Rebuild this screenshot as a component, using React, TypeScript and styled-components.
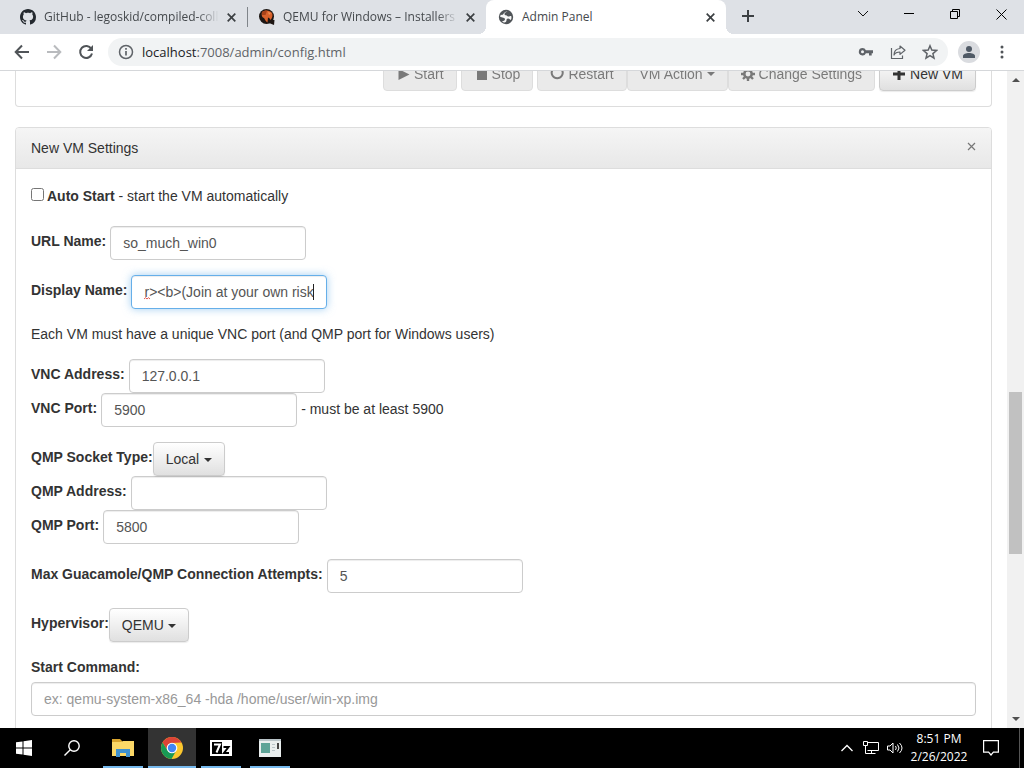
import React from "react";
import styled, { createGlobalStyle } from "styled-components";

const GlobalStyle = createGlobalStyle`
  * { box-sizing: border-box; }
  body { margin: 0; background: #fff; color: #333; font: 14px/20px "Liberation Sans", Arial, sans-serif; overflow: hidden; }
  button, input, select { font: inherit; color: inherit; margin: 0; }
`;

const Desktop = styled.div`
  display: flex;
  flex-direction: column;
  height: 100vh;
`;

const uiFont = `"Open Sans", "Noto Sans", sans-serif`;

const IconButton = styled.button<{ $w?: number }>`
  display: flex;
  align-items: center;
  justify-content: center;
  flex: none;
  width: ${(p) => p.$w ?? 32}px;
  height: 32px;
  padding: 0;
  border: 0;
  background: none;
  color: #5f6368;
`;

/* Tab strip */
const TabStrip = styled.header`
  display: flex;
  height: 34px;
  background: #dee1e6;
  font: 12px/16px ${uiFont};
  color: #45494d;
`;

const Tab = styled.div<{ $w: number; $lead?: number }>`
  display: flex;
  align-items: center;
  gap: 8px;
  width: ${(p) => p.$w}px;
  padding: 0 11px 0 ${(p) => p.$lead ?? 12}px;
`;

/* The selected tab flares out into the toolbar at both feet. */
const ActiveTab = styled(Tab)`
  position: relative;
  background: #fff;
  border-radius: 8px 8px 0 0;
  &::before,
  &::after {
    content: "";
    position: absolute;
    bottom: 0;
    width: 8px;
    height: 8px;
  }
  &::before { right: 100%; background: radial-gradient(circle at 0 0, transparent 8px, #fff 8px); }
  &::after { left: 100%; background: radial-gradient(circle at 100% 0, transparent 8px, #fff 8px); }
`;

const Favicon = styled.svg`
  flex: none;
  width: 16px;
  height: 16px;
`;

const TabTitle = styled.span<{ $fade?: boolean }>`
  flex: 1;
  min-width: 0;
  overflow: hidden;
  white-space: nowrap;
  ${(p) => p.$fade && "mask-image: linear-gradient(to right, #000 88%, transparent);"}
`;

const TabDivider = styled.span`
  align-self: center;
  width: 1px;
  height: 20px;
  background: #80858a;
`;

const WindowControls = styled.div`
  display: flex;
  margin-left: auto;
  height: 28px;
  align-items: center;
`;

/* Toolbar */
const Toolbar = styled.div`
  display: flex;
  align-items: center;
  height: 37px;
  padding: 0 0 0 6px;
  background: #fff;
  border-bottom: 1px solid #d5d7da;
`;

const AddressBar = styled.div`
  display: flex;
  flex: 1;
  align-items: center;
  gap: 8px;
  height: 28px;
  margin: 0 10px 0 6px;
  padding: 0 2px 0 10px;
  border-radius: 14px;
  background: #f1f3f4;
`;

const AddressActions = styled.div`
  display: flex;
`;

const Address = styled.div`
  flex: 1;
  font: 13px/20px ${uiFont};
  color: #5f6368;
  b { font-weight: 400; color: #202124; }
`;

const Avatar = styled.button`
  display: flex;
  align-items: center;
  justify-content: center;
  width: 22px;
  height: 22px;
  padding: 0;
  border: 0;
  border-radius: 50%;
  background: #dadce0;
`;

/* Page */
const Viewport = styled.div`
  display: flex;
  flex: 1;
  min-height: 0;
`;

const Page = styled.main`
  flex: 1;
  min-width: 0;
  overflow: hidden;
  padding: 0 15px;
`;

const PageContent = styled.div`
  margin-top: -14px;
`;

const ActionPanel = styled.section`
  display: flex;
  justify-content: flex-end;
  gap: 4px;
  margin-bottom: 20px;
  padding: 0 15px 15px;
  border: 1px solid #ddd;
  border-top: 0;
  border-radius: 0 0 4px 4px;
`;

const ButtonGroup = styled.div`
  display: flex;
`;

const Button = styled.button`
  display: flex;
  align-items: center;
  gap: 4px;
  height: 34px;
  padding: 0 12px;
  border: 1px solid #ccc;
  border-radius: 4px;
  background: linear-gradient(#fff, #e0e0e0);
  white-space: nowrap;
  box-shadow: 0 1px 1px rgba(0, 0, 0, 0.08);
  &:disabled { background: #e0e0e0; opacity: 0.65; box-shadow: none; }
`;

const Glyph = styled.svg`
  flex: none;
  width: 14px;
  height: 14px;
  fill: currentColor;
`;

const Caret = styled.span`
  border-top: 4px solid currentColor;
  border-left: 4px solid transparent;
  border-right: 4px solid transparent;
`;

const Panel = styled.section`
  border: 1px solid #ddd;
  border-radius: 4px 4px 0 0;
`;

const PanelHeading = styled.div`
  display: flex;
  align-items: center;
  justify-content: space-between;
  height: 41px;
  padding: 0 15px;
  border-bottom: 1px solid #ddd;
  border-radius: 3px 3px 0 0;
  background: linear-gradient(#f5f5f5, #e8e8e8);
`;

const CloseButton = styled.button`
  display: flex;
  padding: 0 0 3px;
  border: 0;
  background: none;
`;

const PanelBody = styled.form`
  display: flex;
  flex-direction: column;
  gap: 15px;
  padding: 15px;
`;

const CheckRow = styled.div`
  display: flex;
  align-items: center;
  gap: 3px;
  padding: 2px 0 5px;
  input { width: 13px; height: 13px; margin: 0 0 3px; }
`;

const Group = styled.div`
  display: flex;
  flex-direction: column;
`;

const Row = styled.div<{ $tight?: boolean }>`
  display: flex;
  align-items: center;
  gap: ${(p) => (p.$tight ? 0 : 4)}px;
`;

const Label = styled.label`
  padding-bottom: 4px;
  font-weight: 700;
  white-space: nowrap;
`;

const Note = styled.span`
  padding-bottom: 2px;
`;

const Paragraph = styled.p`
  margin: 0;
`;

const TextInput = styled.input<{ $wide?: boolean; $focused?: boolean }>`
  width: ${(p) => (p.$wide ? "100%" : "196px")};
  height: 34px;
  padding: 0 12px;
  border: 1px solid ${(p) => (p.$focused ? "#66afe9" : "#ccc")};
  border-radius: 4px;
  outline: 0;
  background: #fff;
  color: #555;
  box-shadow: inset 0 1px 1px rgba(0, 0, 0, 0.075)${(p) => (p.$focused ? ", 0 0 8px rgba(102, 175, 233, 0.6)" : "")};
  &::placeholder { color: #999; opacity: 1; }
`;

const FieldWrap = styled.div`
  position: relative;
  display: flex;
`;

const TextCaret = styled.span`
  position: absolute;
  top: 9px;
  right: 13px;
  width: 1px;
  height: 16px;
  background: #222;
`;

const SpellingMark = styled.svg`
  position: absolute;
  left: 13px;
  top: 22px;
  width: 6px;
  height: 3px;
`;

const Select = styled.select`
  height: 34px;
  padding: 0 24px 0 12px;
  border: 1px solid #ccc;
  border-radius: 4px;
  appearance: none;
  background: linear-gradient(#fff, #e0e0e0);
  box-shadow: 0 1px 1px rgba(0, 0, 0, 0.08);
`;

const SelectCaret = styled(Caret)`
  position: absolute;
  right: 13px;
  top: 16px;
  pointer-events: none;
`;

const CommandGroup = styled.div`
  display: flex;
  flex-direction: column;
  gap: 1px;
`;

const ScrollBar = styled.div`
  display: flex;
  flex-direction: column;
  align-items: center;
  width: 17px;
  background: #f1f1f1;
`;

const ScrollArrow = styled.svg`
  flex: none;
  width: 17px;
  height: 17px;
  fill: #505050;
`;

const Track = styled.div`
  display: flex;
  flex-direction: column;
  flex: 1;
  width: 13px;
`;

const TrackSpace = styled.div<{ $grow: number }>`
  flex: ${(p) => p.$grow};
`;

const Thumb = styled.div`
  flex: 162;
  background: #c1c1c1;
`;

/* Taskbar */
const Taskbar = styled.footer`
  display: flex;
  align-items: center;
  height: 40px;
  background: #000;
  color: #fff;
`;

const TaskButton = styled.button`
  display: flex;
  align-items: center;
  justify-content: center;
  width: 48px;
  height: 40px;
  padding: 0;
  border: 0;
  background: none;
  color: #fff;
`;

const RunningApps = styled.div`
  display: flex;
  gap: 1px;
  margin-left: 3px;
`;

const AppButton = styled(TaskButton)<{ $active?: boolean }>`
  width: ${(p) => (p.$active ? 48 : 40)}px;
  margin: 0 ${(p) => (p.$active ? 0 : 4)}px;
  background: ${(p) => (p.$active ? "#333" : "none")};
  box-shadow: inset 0 -2px #76b9ed;
`;

const Tray = styled.div`
  display: flex;
  align-items: center;
  margin-left: auto;
`;

const TrayButton = styled.button<{ $w: number }>`
  display: flex;
  align-items: center;
  justify-content: center;
  width: ${(p) => p.$w}px;
  height: 40px;
  padding: 0;
  border: 0;
  background: none;
  color: #fff;
`;

const Clock = styled.time`
  width: 64px;
  font: 12px/18px ${uiFont};
  text-align: center;
  white-space: nowrap;
`;

const ShowDesktop = styled.span`
  width: 5px;
  height: 40px;
  margin-left: 8px;
  border-left: 1px solid #555;
`;

const CloseX = () => (
  <svg width="9" height="9" viewBox="0 0 9 9" stroke="#3c4043" strokeWidth="1.7">
    <path d="M.7.7l7.6 7.6M8.300.7L.7 8.300" />
  </svg>
);

interface FieldProps {
  id: string;
  label: string;
  value: string;
  note?: string;
}

const Field = ({ id, label, value, note }: FieldProps) => (
  <Row>
    <Label htmlFor={id}>{label}</Label>
    <TextInput id={id} defaultValue={value} />
    {note && <Note>{note}</Note>}
  </Row>
);

const Choice = ({ id, label, value }: FieldProps) => (
  <Row $tight>
    <Label htmlFor={id}>{label}</Label>
    <FieldWrap>
      <Select id={id}>
        <option>{value}</option>
      </Select>
      <SelectCaret />
    </FieldWrap>
  </Row>
);

const BrowserTabs = () => (
  <TabStrip>
    <Tab $w={247} $lead={20}>
      <Favicon viewBox="0 0 16 16" fill="#24292f">
        <path d="M8 0C3.58 0 0 3.58 0 8c0 3.54 2.29 6.53 5.47 7.59.4.07.55-.17.55-.38 0-.19-.01-.82-.01-1.49-2.01.37-2.53-.49-2.69-.94-.09-.23-.48-.94-.82-1.13-.28-.15-.68-.52-.01-.53.63-.01 1.08.58 1.23.82.72 1.21 1.87.87 2.33.66.07-.52.28-.87.51-1.07-1.78-.2-3.64-.89-3.64-3.95 0-.87.31-1.59.82-2.15-.08-.2-.36-1.02.08-2.12 0 0 .67-.21 2.2.82.64-.18 1.32-.27 2-.27s1.36.09 2 .27c1.53-1.04 2.2-.82 2.2-.82.44 1.1.16 1.92.08 2.12.51.56.82 1.27.82 2.15 0 3.07-1.87 3.75-3.65 3.95.29.25.54.73.54 1.48 0 1.07-.01 1.93-.01 2.2 0 .21.15.46.55.38A8.01 8.01 0 0 0 16 8c0-4.42-3.58-8-8-8z" />
      </Favicon>
      <TabTitle $fade>GitHub - legoskid/compiled-collab-vm</TabTitle>
      <CloseX />
    </Tab>
    <TabDivider />
    <Tab $w={238} $lead={11}>
      <Favicon viewBox="0 0 16 16">
        <circle cx="7.5" cy="7.500" r="7.500" fill="#1d1613" />
        <path d="M10 10l5.500 1-.5 5-5-2z" fill="#1d1613" />
        <path d="M3 3c3-2.500 8-2 10 1 1 2 .5 5-1.500 7-.5-1-1-2-2.500-2.500l-.5 5C6 12 6 10 5 9 3.500 8.500 2 7 3 3z" fill="#d9622c" />
        <path d="M3 3c2-1.500 4-1.500 5-1L6.500 6 3 6z" fill="#a9431a" />
        <path d="M9 3l3 1-2 2z" fill="#f09050" />
      </Favicon>
      <TabTitle $fade>QEMU for Windows – Installers (64 bit)</TabTitle>
      <CloseX />
    </Tab>
    <ActiveTab $w={240}>
      <Favicon viewBox="0 0 16 16">
        <circle cx="8" cy="8" r="7.200" fill="#505458" />
        <path d="M9.500 2.500C8 3 6.500 3.500 6.500 5c0 1 .8 1.200 1.500 1.200 1.200 0 1.200 1.300 2.200 1.300 1.200 0 1.800-.5 3-.5.5 1.500.3 3-.5 4-1-.8-1.500-1.500-2.700-1.500-1 0-1.500.8-1.500 1.700 0 1-.7 2.300-2 2.300-1 0-2-.7-2.500-1.500C5.500 12 7 11.500 7 10.200 7 9 5.500 9 4.500 8.500 3.700 8.100 3 7.800 2.200 8c0-.8.2-1.500.6-2.200 1 .3 2 .2 2.400-.5C5.700 4 7.500 2.200 9.500 2.500z" fill="#f7f7f7" />
      </Favicon>
      <TabTitle>Admin Panel</TabTitle>
      <CloseX />
    </ActiveTab>
    <IconButton $w={44} aria-label="New tab">
      <svg width="12" height="12" viewBox="0 0 12 12" stroke="#3c4043" strokeWidth="2"><path d="M6 0v12M0 6h12" /></svg>
    </IconButton>
    <WindowControls>
      <IconButton $w={46} aria-label="Search tabs">
        <svg width="12" height="8" viewBox="0 0 12 8" fill="none" stroke="#111"><path d="M1 1l5 5 5-5" /></svg>
      </IconButton>
      <IconButton $w={46} aria-label="Minimize">
        <svg width="10" height="2" viewBox="0 0 10 2"><path d="M0 0h10v1H0z" fill="#000" /></svg>
      </IconButton>
      <IconButton $w={46} aria-label="Restore">
        <svg width="10" height="10" viewBox="0 0 10 10" fill="none" stroke="#000"><path d="M.5 2.500h7v7h-7zM2.500 2.500v-2h7v7h-2" /></svg>
      </IconButton>
      <IconButton $w={46} aria-label="Close">
        <svg width="11" height="11" viewBox="0 0 11 11" stroke="#000"><path d="M.5.5l10 10M10.500.5l-10 10" /></svg>
      </IconButton>
    </WindowControls>
  </TabStrip>
);

const BrowserToolbar = () => (
  <Toolbar>
    <IconButton aria-label="Back">
      <svg width="16" height="16" viewBox="0 0 16 16" fill="none" stroke="#505458" strokeWidth="2"><path d="M15 8H2M8 1.500L1.700 8 8 14.500" /></svg>
    </IconButton>
    <IconButton aria-label="Forward">
      <svg width="16" height="16" viewBox="0 0 16 16" fill="none" stroke="#b9bbbe" strokeWidth="2"><path d="M1 8h13M8 1.500L14.300 8 8 14.500" /></svg>
    </IconButton>
    <IconButton aria-label="Reload">
      <svg width="16" height="16" viewBox="0 0 16 16" fill="none" stroke="#505458" strokeWidth="2"><path d="M13.300 4.800A6 6 0 1 0 14 9.500" /><path d="M15 1v6H9z" fill="#505458" stroke="none" /></svg>
    </IconButton>
    <AddressBar>
      <svg width="16" height="16" viewBox="0 0 16 16" fill="none" stroke="#5f6368" strokeWidth="1.500"><circle cx="8" cy="8" r="6.500" /><path d="M8 7v4.500M8 4v1.700" strokeWidth="1.700" /></svg>
      <Address><b>localhost</b>:7008/admin/config.html</Address>
      <AddressActions>
        <IconButton aria-label="Passwords">
          <svg width="16" height="16" viewBox="0 0 16 16"><path d="M4.500 4a3.700 3.700 0 1 0 3.400 5.200H11V11.500h2.700V9.200H15V6.200H7.900A3.700 3.700 0 0 0 4.500 4zm0 2.300a1.500 1.500 0 1 1 0 3 1.500 1.500 0 0 1 0-3z" fill="#5f6368" /></svg>
        </IconButton>
        <IconButton aria-label="Share">
          <svg width="16" height="16" viewBox="0 0 16 16" fill="none" stroke="#5f6368" strokeWidth="1.200"><path d="M1.500 4v10.500h11V11.500" /><path d="M10 2l5 4.200-5 4.200V8C7 8 5 9 4 11c0-4 2-6.200 6-6.500z" strokeLinejoin="round" /></svg>
        </IconButton>
        <IconButton aria-label="Bookmark">
          <svg width="16" height="16" viewBox="0 0 16 16" fill="none" stroke="#5f6368" strokeWidth="1.500"><path d="M8 1.800l1.800 4.300 4.700.4-3.600 3.100 1.100 4.600L8 11.700l-4 2.500 1.100-4.600L1.500 6.500l4.700-.4z" /></svg>
        </IconButton>
      </AddressActions>
    </AddressBar>
    <Avatar aria-label="Profile">
      <svg width="14" height="14" viewBox="0 0 14 14" fill="#505a66"><circle cx="7" cy="4" r="3" /><path d="M1 13v-2c0-2 3-3 6-3s6 1 6 3v2z" /></svg>
    </Avatar>
    <IconButton $w={44} aria-label="Menu">
      <svg width="4" height="14" viewBox="0 0 4 14" fill="#505458"><circle cx="2" cy="2" r="1.500" /><circle cx="2" cy="7" r="1.500" /><circle cx="2" cy="12" r="1.500" /></svg>
    </IconButton>
  </Toolbar>
);

const VmActions = () => (
  <ActionPanel>
    <Button disabled><Glyph viewBox="0 0 14 14"><path d="M2.500 2l11 5.500-11 5.500z" /></Glyph>Start</Button>
    <Button disabled><Glyph viewBox="0 0 14 14"><path d="M3 3h10v10H3z" /></Glyph>Stop</Button>
    <ButtonGroup>
      <Button disabled><Glyph viewBox="0 0 14 14"><path d="M2.200 3.500a5.500 5.500 0 1 0 10 0" fill="none" stroke="currentColor" strokeWidth="2" /></Glyph>Restart</Button>
      <Button disabled>VM Action<Caret /></Button>
      <Button disabled>
        <Glyph viewBox="0 0 14 14"><circle cx="7" cy="7" r="3.700" fill="none" stroke="currentColor" strokeWidth="2.500" /><path d="M7 0v3M7 11v3M0 7h3M11 7h3M2 2l2 2M10 10l2 2M12 2l-2 2M4 10l-2 2" stroke="currentColor" strokeWidth="2.400" /></Glyph>
        Change Settings
      </Button>
    </ButtonGroup>
    <Button><Glyph viewBox="0 0 14 14"><path d="M5.500 1h3v4.500H13v3H8.500V13h-3V8.500H1v-3h4.500z" /></Glyph>New VM</Button>
  </ActionPanel>
);

const SettingsPanel = () => (
  <Panel>
    <PanelHeading>
      New VM Settings
      <CloseButton aria-label="Close panel">
        <svg width="9" height="9" viewBox="0 0 9 9" stroke="#777" strokeWidth="1.200"><path d="M1 1l7 7M8 1L1 8" /></svg>
      </CloseButton>
    </PanelHeading>
    <PanelBody>
      <CheckRow>
        <input type="checkbox" id="auto" />
        <label htmlFor="auto"><b>Auto Start</b> - start the VM automatically</label>
      </CheckRow>
      <Field id="url" label="URL Name:" value="so_much_win0" />
      <Row>
        <Label htmlFor="display">Display Name:</Label>
        <FieldWrap>
          <TextInput id="display" $focused defaultValue="r><b>(Join at your own risk" />
          <TextCaret />
          <SpellingMark viewBox="0 0 6 3" fill="none" stroke="#e0574f"><path d="M0 2l1.500-1.300L3 2l1.500-1.300L6 2" /></SpellingMark>
        </FieldWrap>
      </Row>
      <Paragraph>Each VM must have a unique VNC port (and QMP port for Windows users)</Paragraph>
      <Group>
        <Field id="vnc-address" label="VNC Address:" value="127.0.0.1" />
        <Field id="vnc-port" label="VNC Port:" value="5900" note="- must be at least 5900" />
      </Group>
      <Group>
        <Choice id="qmp-type" label="QMP Socket Type:" value="Local" />
        <Field id="qmp-address" label="QMP Address:" value="" />
        <Field id="qmp-port" label="QMP Port:" value="5800" />
      </Group>
      <Field id="attempts" label="Max Guacamole/QMP Connection Attempts:" value="5" />
      <Choice id="hypervisor" label="Hypervisor:" value="QEMU" />
      <CommandGroup>
        <Label htmlFor="command">Start Command:</Label>
        <TextInput id="command" $wide placeholder="ex: qemu-system-x86_64 -hda /home/user/win-xp.img" />
      </CommandGroup>
    </PanelBody>
  </Panel>
);

const SystemTaskbar = () => (
  <Taskbar>
    <TaskButton aria-label="Start menu">
      <svg width="16" height="16" viewBox="0 0 16 16" fill="#fff"><path d="M0 2.300l6.500-.9v6.100H0zM7.500 1.200L16 0v7.500H7.500zM0 8.500h6.500v6.100L0 13.700zM7.500 8.500H16V16l-8.500-1.200z" /></svg>
    </TaskButton>
    <TaskButton aria-label="Search">
      <svg width="16" height="16" viewBox="0 0 16 16" fill="none" stroke="#fff" strokeWidth="1.400"><circle cx="10" cy="6" r="5.200" /><path d="M6.300 9.700L.5 15.500" /></svg>
    </TaskButton>
    <RunningApps>
      <AppButton aria-label="File Explorer">
        <svg width="22" height="18" viewBox="0 0 22 18"><path d="M0 0h8l2 2v3H0z" fill="#d9a52e" /><path d="M0 3h9l2-1h11v15H0z" fill="#fbd867" /><path d="M4 10h14v8h-4v-4H8v4H4z" fill="#3f91cf" /></svg>
      </AppButton>
      <AppButton $active aria-label="Chrome">
        <svg width="22" height="22" viewBox="0 0 22 22"><circle cx="11" cy="11" r="11" fill="#fbc72e" /><path d="M1.500 5.500A11 11 0 0 1 20.500 5.500L11 6 6.700 13.500z" fill="#dc4437" /><path d="M1.500 5.500A11 11 0 0 0 10.500 22L15.300 13.500 11 16 6.700 13.500z" fill="#189a55" /><circle cx="11" cy="11" r="5.300" fill="#fff" /><circle cx="11" cy="11" r="4.200" fill="#4285f4" /></svg>
      </AppButton>
      <AppButton aria-label="7-Zip">
        <svg width="22" height="16" viewBox="0 0 22 16"><path d="M0 0h22v16H0z" fill="#fff" /><path d="M2 2h10v12H2z" fill="#000" /><path d="M4 4.500h6L6.500 12.500" fill="none" stroke="#fff" strokeWidth="2" /><path d="M13.500 7h5l-4.500 6h5" fill="none" stroke="#000" strokeWidth="2" /></svg>
      </AppButton>
      <AppButton aria-label="Server">
        <svg width="22" height="18" viewBox="0 0 22 18"><path d="M0 0h22v18H0z" fill="#e9eeee" /><path d="M0 0h22v2H0z" fill="#b9c4c8" /><path d="M2 4h9v10H2z" fill="#5da397" /><path d="M13 5h3v1h-3zM13 8h3v1h-3zM13 11h3v1h-3z" fill="#b9c4c8" /><path d="M18 4h2v6h-2z" fill="#444" /></svg>
      </AppButton>
    </RunningApps>
    <Tray>
      <TrayButton $w={24} aria-label="Hidden icons">
        <svg width="12" height="8" viewBox="0 0 12 8" fill="none" stroke="#fff" strokeWidth="1.300"><path d="M.5 7L6 1.500 11.500 7" /></svg>
      </TrayButton>
      <TrayButton $w={24} aria-label="Network">
        <svg width="16" height="14" viewBox="0 0 16 14" fill="none" stroke="#fff"><path d="M4.500 1.500h11v8h-11M.5.5h4v4h-4zM2.500 4.500v8h10M8.500 9.500v3" /></svg>
      </TrayButton>
      <TrayButton $w={24} aria-label="Volume">
        <svg width="17" height="14" viewBox="0 0 17 14" fill="none" stroke="#fff"><path d="M.5 5v4h2.500l3 3V2L3 5zM8.500 5q1.500 2 0 4M10.500 3.500q3 3.500 0 7M12.500 2q5 5 0 10" /></svg>
      </TrayButton>
      <Clock>8:51 PM<br />2/26/2022</Clock>
      <TrayButton $w={40} aria-label="Notifications">
        <svg width="16" height="16" viewBox="0 0 16 16" fill="none" stroke="#fff" strokeWidth="1.200"><path d="M.6.6h14.800v11.500h-5L8 15l-2.400-2.900h-5z" /></svg>
      </TrayButton>
      <ShowDesktop />
    </Tray>
  </Taskbar>
);

export default function App() {
  return (
    <Desktop>
      <GlobalStyle />
      <BrowserTabs />
      <BrowserToolbar />
      <Viewport>
        <Page>
          <PageContent>
            <VmActions />
            <SettingsPanel />
          </PageContent>
        </Page>
        <ScrollBar>
          <ScrollArrow viewBox="0 0 17 17"><path d="M5 11l4-4 4 4z" /></ScrollArrow>
          <Track>
            <TrackSpace $grow={304} />
            <Thumb />
            <TrackSpace $grow={157} />
          </Track>
          <ScrollArrow viewBox="0 0 17 17"><path d="M5 6l4 4 4-4z" /></ScrollArrow>
        </ScrollBar>
      </Viewport>
      <SystemTaskbar />
    </Desktop>
  );
}
